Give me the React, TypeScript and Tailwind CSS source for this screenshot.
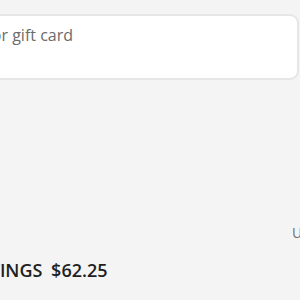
export default function App() {
  return (
    <div className="w-[300px] h-[300px] overflow-hidden bg-[#f4f4f4] font-['Open_Sans',sans-serif]">
      <div className="ml-[-160px] w-[520px]">
        {/* promo code field */}
        <div className="pt-[14px]">
          <div className="w-[459px] h-[66px] rounded-[9px] border-2 border-[#e6e6e6] bg-white pl-[11px] pt-[7px] text-[16px] text-[#6b6b6b]">
            Enter promo code or gift card
          </div>
        </div>

        <div className="mt-[143px] pl-[452px] text-[14px] text-[#707070] leading-5">
          USD
        </div>

        <div className="mt-[15px] text-[18px] font-semibold text-[#1f1f1f] leading-6 pl-[66px]">
          TOTAL SAVINGS <span className="ml-1">$62.25</span>
        </div>
      </div>
    </div>
  );
}
